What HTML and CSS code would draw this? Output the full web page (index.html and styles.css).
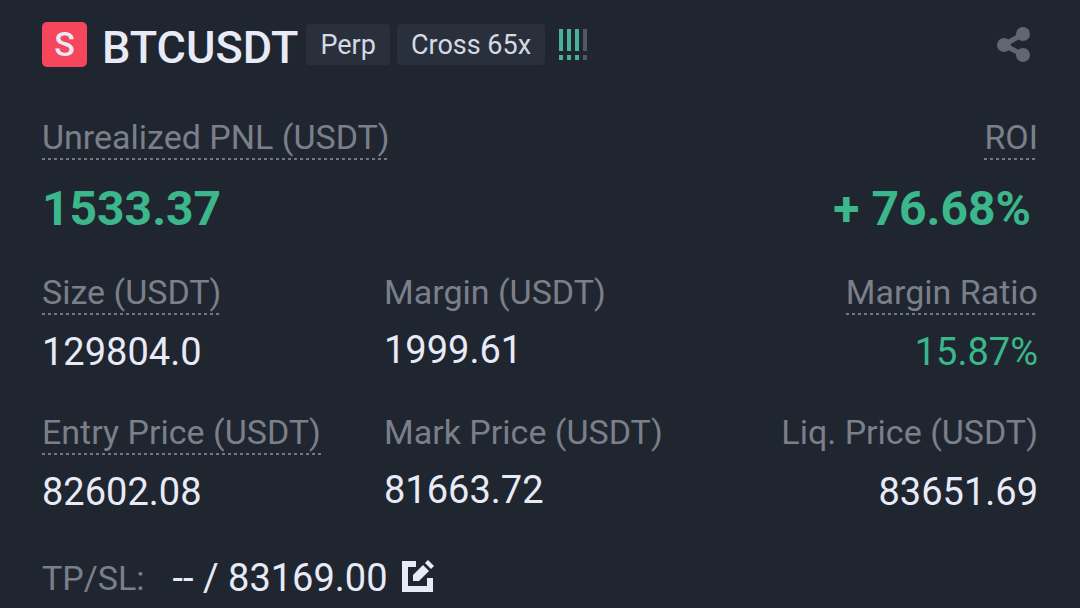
FILE: index.html
```html
<!DOCTYPE html>
<html lang="en">
<head>
<meta charset="UTF-8">
<meta name="viewport" content="width=device-width, initial-scale=1.0">
<title>BTCUSDT Perp Position</title>
<link rel="stylesheet" href="styles.css">
</head>
<body>

<main class="position">
    <header class="header">
        <span class="side">S</span>
        <h1>BTCUSDT</h1>
        <div class="tags">
            <span class="tag">Perp</span>
            <span class="tag">Cross 65x</span>
        </div>
        <svg class="risk" width="29" height="31" viewBox="0 0 29 31" aria-hidden="true">
            <path class="on" d="M0 0h4v22H0zM8 0h4v22H8zM16 0h4v22h-4zM0 26h4v5H0zM8 26h4v5H8zM16 26h4v5h-4z"/>
            <path class="off" d="M24 0h4v22h-4zM24 26h4v5h-4z"/>
        </svg>
        <button type="button" class="icon-button share" aria-label="Share">
            <svg width="34" height="36" viewBox="0 0 34 36">
                <path d="M26 7L7 18l19 10" fill="none" stroke="currentColor" stroke-width="5"/>
                <circle cx="7" cy="18" r="7" fill="currentColor"/>
                <circle cx="26" cy="7" r="7" fill="currentColor"/>
                <circle cx="26" cy="28" r="7" fill="currentColor"/>
            </svg>
        </button>
    </header>

    <dl class="summary">
        <div class="item">
            <dt><span class="hint">Unrealized PNL (USDT)</span></dt>
            <dd class="green">1533.37</dd>
        </div>
        <div class="item right">
            <dt><span class="hint">ROI</span></dt>
            <dd class="green">+ 76.68%</dd>
        </div>
    </dl>

    <dl class="details">
        <div class="item">
            <dt><span class="hint">Size (USDT)</span></dt>
            <dd>129804.0</dd>
        </div>
        <div class="item">
            <dt>Margin (USDT)</dt>
            <dd>1999.61</dd>
        </div>
        <div class="item right">
            <dt><span class="hint">Margin Ratio</span></dt>
            <dd class="green">15.87%</dd>
        </div>
        <div class="item">
            <dt><span class="hint">Entry Price (USDT)</span></dt>
            <dd>82602.08</dd>
        </div>
        <div class="item">
            <dt>Mark Price (USDT)</dt>
            <dd>81663.72</dd>
        </div>
        <div class="item right">
            <dt>Liq. Price (USDT)</dt>
            <dd>83651.69</dd>
        </div>
    </dl>

    <footer class="tpsl">
        <span class="tpsl-label">TP/SL:</span>
        <span>-- / 83169.00</span>
        <button type="button" class="icon-button" aria-label="Edit TP/SL">
            <svg width="32" height="36" viewBox="0 0 32 36" fill="currentColor">
                <path d="M0 1h14v6H6v19h19v-8h6v14H0z"/>
                <path d="M11 15L21 5l6 6-10 10h-6z"/>
                <path d="M23 3l3-3 6 6-3 3z"/>
            </svg>
        </button>
    </footer>
</main>

</body>
</html>
```
FILE: styles.css
```css
body {
    font-family: Roboto, "Liberation Sans", sans-serif;
    margin: 0;
    background-color: #202630;
    color: #e8ebf7;
}
.position {
    padding: 22px 42px 4px;
}
.header {
    display: flex;
    align-items: center;
    height: 45px;
    margin-bottom: 49px;
}
.side {
    width: 45px;
    height: 45px;
    line-height: 45px;
    border-radius: 5px;
    background-color: #f6465d;
    font-size: 34px;
    font-weight: 500;
    text-align: center;
}
h1 {
    margin: 6px 8px 0 15px;
    font-size: 45px;
    font-weight: 500;
    line-height: 48px;
}
.tags {
    display: flex;
    gap: 7px;
}
.tag {
    padding: 1px 14px 0;
    border-radius: 4px;
    background-color: #29303b;
    color: #d5d9e4;
    font-size: 27px;
    line-height: 40px;
}
.risk {
    margin-left: 14px;
}
.risk .on {
    fill: #46b394;
}
.risk .off {
    fill: #535763;
}
.icon-button {
    display: flex;
    padding: 0;
    border: none;
    background: none;
    color: inherit;
    cursor: pointer;
}
.share {
    margin-left: auto;
    margin-right: 7px;
    color: #626670;
}
dl, dd {
    margin: 0;
}
.summary {
    display: flex;
    justify-content: space-between;
    margin-bottom: 33px;
}
.details {
    display: grid;
    grid-template-columns: repeat(3, 1fr);
    gap: 35px 30px;
    margin-bottom: 38px;
}
.right {
    text-align: right;
}
dt {
    color: #7b7f8a;
    font-size: 34px;
    line-height: 42px;
}
.right dt {
    min-height: 44px;
}
.hint {
    display: inline-block;
    padding-bottom: 2px;
    background: repeating-linear-gradient(to right, #747883 0 3px, transparent 3px 6px) left bottom / 100% 2px no-repeat;
}
dd {
    margin-top: 13px;
    font-size: 38px;
    line-height: 48px;
}
.summary dd {
    margin-top: 20px;
    font-size: 48px;
    font-weight: 700;
    line-height: 58px;
}
.summary .right dd {
    padding-right: 7px;
}
.green {
    color: #3cb68b;
}
.tpsl {
    display: flex;
    align-items: center;
    font-size: 38px;
    line-height: 48px;
}
.tpsl-label {
    margin-right: 28px;
    color: #7b7f8a;
    font-size: 34px;
}
.tpsl .icon-button {
    margin-left: 14px;
}
```
